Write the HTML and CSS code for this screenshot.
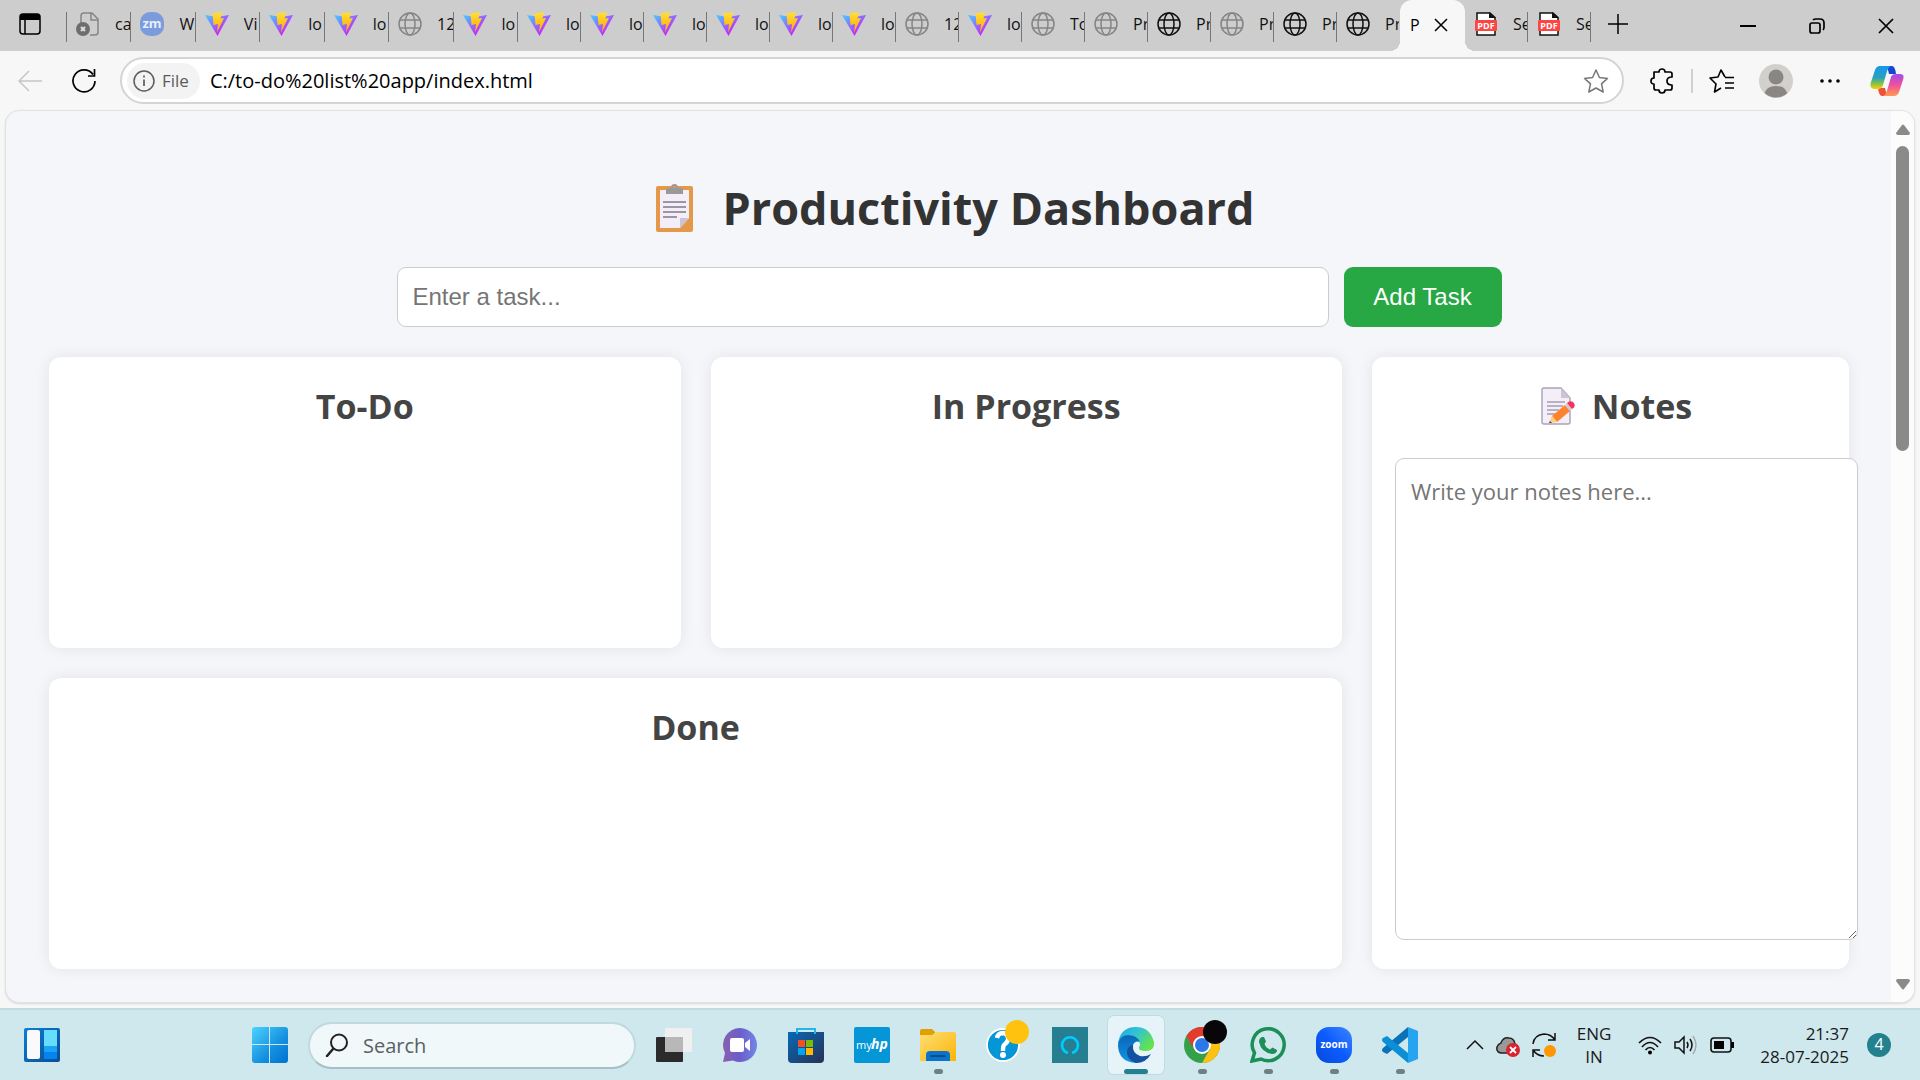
FILE: index.html
```html
<!DOCTYPE html>
<html lang="en">
<head>
<meta charset="utf-8">
<title>Productivity Dashboard</title>
<link rel="stylesheet" href="styles.css">
</head>
<body>
<svg class="defs" aria-hidden="true">
  <defs>
    <linearGradient id="viteTri" x1="0" y1="0" x2="1" y2="1"><stop offset="0" stop-color="#41d1ff"/><stop offset=".45" stop-color="#8f6bff"/><stop offset=".8" stop-color="#d01cff"/></linearGradient>
    <linearGradient id="viteBolt" x1="0" y1="0" x2="0" y2="1"><stop offset="0" stop-color="#ffe03a"/><stop offset="1" stop-color="#ffa800"/></linearGradient>
    <linearGradient id="winBlue" x1="0" y1="0" x2="1" y2="1"><stop offset="0" stop-color="#4cd3ff"/><stop offset=".6" stop-color="#1490df"/><stop offset="1" stop-color="#0070d0"/></linearGradient>
    <linearGradient id="widgetBlue" x1="0" y1="0" x2="1" y2="1"><stop offset="0" stop-color="#0a7fd8"/><stop offset="1" stop-color="#0c4c94"/></linearGradient>
    <linearGradient id="chatPurple" x1="0" y1="0" x2="1" y2="0"><stop offset="0" stop-color="#8a5fae"/><stop offset=".5" stop-color="#6a5fcb"/><stop offset="1" stop-color="#7286e6"/></linearGradient>
    <linearGradient id="storeBlue" x1="0" y1="0" x2="1" y2="1"><stop offset="0" stop-color="#0869b8"/><stop offset="1" stop-color="#263255"/></linearGradient>
    <linearGradient id="folderYellow" x1="0" y1="0" x2="1" y2="1"><stop offset="0" stop-color="#ffdf78"/><stop offset="1" stop-color="#fbb404"/></linearGradient>
    <linearGradient id="edgeTop" x1="0" y1="0" x2="1" y2=".6"><stop offset="0" stop-color="#1fa7e4"/><stop offset=".5" stop-color="#32c4d2"/><stop offset="1" stop-color="#66e34b"/></linearGradient>
    <linearGradient id="edgeLeft" x1="0" y1="0" x2="0" y2="1"><stop offset="0" stop-color="#0a66b6"/><stop offset="1" stop-color="#1295e8"/></linearGradient>
    <linearGradient id="zoomBlue" x1="0" y1="1" x2="1" y2="0"><stop offset="0" stop-color="#0848d8"/><stop offset=".5" stop-color="#0b5cff"/><stop offset="1" stop-color="#3f86ff"/></linearGradient>
    <linearGradient id="copA" x1="0" y1="0" x2="0" y2="1"><stop offset="0" stop-color="#1498f0"/><stop offset=".5" stop-color="#2aa0c0"/><stop offset=".75" stop-color="#7dc04a"/><stop offset="1" stop-color="#ffd000"/></linearGradient>
    <linearGradient id="copB" x1="0" y1="0" x2="0" y2="1"><stop offset="0" stop-color="#a04cf0"/><stop offset=".5" stop-color="#f0509a"/><stop offset="1" stop-color="#ff9a50"/></linearGradient>
    <symbol id="vite" viewBox="0 0 24 24"><path d="M0 3 12 5 24 3 12.500 24Z" fill="url(#viteTri)"/><path d="M7.500 1.500 17 0 15.500 6.500 19 6 12 20.500 13 12 8.500 13Z" fill="url(#viteBolt)"/></symbol>
    <symbol id="globe" viewBox="0 0 24 24"><g fill="none" stroke="currentColor" stroke-width="1.500"><circle cx="12" cy="12" r="11"/><ellipse cx="12" cy="12" rx="5" ry="11"/><path d="M2 8H22M2 16H22"/></g></symbol>
    <symbol id="pdf" viewBox="0 0 24 24"><path d="M3 1H16L21 5.500V23H3Z" fill="#fff" stroke="#111" stroke-width="1.500"/><path d="M15 0V6H22Z" fill="#111"/><rect x="1" y="8" width="22" height="11" rx="1" fill="#ff4444"/><text x="12" y="17" text-anchor="middle" class="pdf-text">PDF</text></symbol>
  </defs>
</svg>

<div class="screen">
  <header class="tabstrip">
    <button class="bare workspace" aria-label="Tab actions"><svg width="22" height="22" viewBox="0 0 22 22"><rect x="1" y="1" width="20" height="20" rx="3" fill="none" stroke="#000" stroke-width="1.500"/><path d="M1 7V4Q1 1 4 1H18Q21 1 21 4V7Z"/><path d="M6 7V21" stroke="#000" stroke-width="1.500"/></svg></button>
    <div class="tabs tabs-wide">
      <a class="tab" href="#"><svg class="fav gray"><path d="M5 13V4Q5 1 8 1H16L22 7V20Q22 23 19 23H14M15 1V8H22" fill="none" stroke="currentColor" stroke-width="1.500"/><circle cx="7" cy="17" r="7" fill="#6e6e6e"/><path d="M5 15 9 19M9 15 5 19" stroke="#ddd" stroke-width="2"/></svg><span>ca</span></a>
      <a class="tab" href="#"><svg class="fav"><rect width="24" height="24" rx="10" fill="#7b9bdd"/><text x="12" y="16" text-anchor="middle" class="zm-text">zm</text></svg><span>W</span></a>
      <a class="tab" href="#"><svg class="fav"><use href="#vite"/></svg><span>Vi</span></a>
      <a class="tab" href="#"><svg class="fav"><use href="#vite"/></svg><span>lo</span></a>
      <a class="tab" href="#"><svg class="fav"><use href="#vite"/></svg><span>lo</span></a>
      <a class="tab" href="#"><svg class="fav gray"><use href="#globe"/></svg><span>12</span></a>
      <a class="tab" href="#"><svg class="fav"><use href="#vite"/></svg><span>lo</span></a>
    </div>
    <div class="tabs">
      <a class="tab" href="#"><svg class="fav"><use href="#vite"/></svg><span>lo</span></a>
      <a class="tab" href="#"><svg class="fav"><use href="#vite"/></svg><span>lo</span></a>
      <a class="tab" href="#"><svg class="fav"><use href="#vite"/></svg><span>lo</span></a>
      <a class="tab" href="#"><svg class="fav"><use href="#vite"/></svg><span>lo</span></a>
      <a class="tab" href="#"><svg class="fav"><use href="#vite"/></svg><span>lo</span></a>
      <a class="tab" href="#"><svg class="fav"><use href="#vite"/></svg><span>lo</span></a>
      <a class="tab" href="#"><svg class="fav gray"><use href="#globe"/></svg><span>12</span></a>
      <a class="tab" href="#"><svg class="fav"><use href="#vite"/></svg><span>lo</span></a>
      <a class="tab" href="#"><svg class="fav gray"><use href="#globe"/></svg><span>To</span></a>
      <a class="tab" href="#"><svg class="fav gray"><use href="#globe"/></svg><span>Pr</span></a>
      <a class="tab" href="#"><svg class="fav"><use href="#globe"/></svg><span>Pr</span></a>
      <a class="tab" href="#"><svg class="fav gray"><use href="#globe"/></svg><span>Pr</span></a>
      <a class="tab" href="#"><svg class="fav"><use href="#globe"/></svg><span>Pr</span></a>
      <a class="tab last" href="#"><svg class="fav"><use href="#globe"/></svg><span>Pr</span></a>
      <div class="tab-active"><span>P</span><button class="bare" aria-label="Close tab"><svg width="14" height="14" viewBox="0 0 14 14"><path d="M1 1 13 13M13 1 1 13" stroke="#000" stroke-width="1.500"/></svg></button></div>
      <a class="tab" href="#"><svg class="fav"><use href="#pdf"/></svg><span>Se</span></a>
      <a class="tab" href="#"><svg class="fav"><use href="#pdf"/></svg><span>Se</span></a>
    </div>
    <button class="bare newtab" aria-label="New tab"><svg width="20" height="20" viewBox="0 0 20 20"><path d="M10 0V20M0 10H20" stroke="#000" stroke-width="1.500"/></svg></button>
    <div class="wincontrols">
      <button class="bare" aria-label="Minimize"><svg width="16" height="16" viewBox="0 0 16 16"><path d="M0 8H16" stroke="#000" stroke-width="2"/></svg></button>
      <button class="bare" aria-label="Restore"><svg width="16" height="16" viewBox="0 0 16 16"><g fill="none" stroke="#000" stroke-width="1.700"><rect x="1" y="5" width="10" height="10" rx="2"/><path d="M4 2Q5 1 7 1H11Q15 1 15 5V9Q15 11 14 12"/></g></svg></button>
      <button class="bare" aria-label="Close"><svg width="16" height="16" viewBox="0 0 16 16"><path d="M1 1 15 15M15 1 1 15" stroke="#000" stroke-width="1.700"/></svg></button>
    </div>
  </header>

  <nav class="toolbar">
    <button class="bare back" aria-label="Back"><svg width="24" height="22" viewBox="0 0 24 22"><path d="M24 11H1M11 1 1 11 11 21" fill="none" stroke="#c6c6c6" stroke-width="1.500"/></svg></button>
    <button class="bare reload" aria-label="Reload"><svg width="26" height="26" viewBox="0 0 26 26"><path d="M22 6.500A11 11 0 1 0 24 13M23.500 1V8H17" fill="none" stroke="#000" stroke-width="1.700"/></svg></button>
    <div class="address">
      <button class="file-chip"><svg width="22" height="22" viewBox="0 0 22 22"><circle cx="11" cy="11" r="10" fill="none" stroke="#5c5c5c" stroke-width="1.500"/><path d="M11 9.500V16M11 5.500V7.500" stroke="#5c5c5c" stroke-width="1.700"/></svg>File</button>
      <input class="url" type="text" aria-label="Address" value="C:/to-do%20list%20app/index.html">
      <button class="bare" aria-label="Favorite"><svg width="26" height="26" viewBox="0 0 26 26"><path d="M13 2 16.400 9.500 24.500 10.400 18.500 15.900 20.200 24 13 20 5.800 24 7.500 15.900 1.500 10.400 9.600 9.500Z" fill="none" stroke="#777" stroke-width="1.500" stroke-linejoin="round"/></svg></button>
    </div>
    <button class="bare tool" aria-label="Extensions"><svg width="24" height="26" viewBox="0 0 24 26"><path d="M4 4H9Q9 1 12 1 15 1 15 4H20Q22 4 22 6V9Q17 9 17 13 17 17 22 17V20Q22 22 20 22H15Q15 25 12 25 9 25 9 22H6Q4 22 4 20V16Q1 16 1 13 1 10 4 10Z" fill="none" stroke="#000" stroke-width="1.700" stroke-linejoin="round"/></svg></button>
    <span class="rule"></span>
    <button class="bare tool" aria-label="Favorites"><svg width="26" height="26" viewBox="0 0 26 26"><path d="M16 9 12 2 9 9 1 10 7 16 5.500 24 12 20M16 9.500H25M16 15H25M16 20H25" fill="none" stroke="#000" stroke-width="1.600" stroke-linejoin="round"/></svg></button>
    <button class="bare tool avatar" aria-label="Profile"><svg width="34" height="34" viewBox="0 0 34 34"><defs><clipPath id="avatarClip"><circle cx="17" cy="17" r="16.500"/></clipPath></defs><circle cx="17" cy="17" r="17" fill="#d2d0cc"/><g fill="#8a8684" clip-path="url(#avatarClip)"><circle cx="17" cy="13" r="7.500"/><path d="M5 34Q5 22 17 22T29 34Z"/></g></svg></button>
    <button class="bare tool dots" aria-label="Settings and more"><svg width="20" height="4" viewBox="0 0 20 4"><circle cx="2" cy="2" r="1.800"/><circle cx="10" cy="2" r="1.800"/><circle cx="18" cy="2" r="1.800"/></svg></button>
    <button class="bare tool copilot" aria-label="Copilot"><svg width="34" height="32" viewBox="0 0 34 32"><path d="M17 1H22Q25 1 26 9H19Z" fill="#1746d0"/><path d="M17 31H12Q9 31 8 23H15Z" fill="#f0503a"/><path d="M10 1H21Q18 2 16.500 8L13 20Q12 24 8 24H4Q-1 23 1 17L5 5Q6.500 1 10 1Z" fill="url(#copA)"/><path d="M24 31H13Q16 30 17.500 24L21 12Q22 9 26 9H30Q35 9 33 15L29 27Q27.500 31 24 31Z" fill="url(#copB)"/></svg></button>
  </nav>

  <div class="viewport">
    <main class="page">
      <h1><svg width="40" height="50" viewBox="0 0 40 50"><rect x="1" y="3" width="37" height="46" rx="2" fill="#e5984a"/><path d="M5 7H34V35L25 45H5Z" fill="#f3eef8"/><path d="M34 35H25V45Z" fill="#cbc3d6"/><path d="M11 11V7Q11 5 14 5H16Q16 1 19.500 1T23 5H25Q28 5 28 7V11Z" fill="#999"/><circle cx="19.500" cy="4" r="1.300" fill="#e5984a"/><path d="M8 19H31M8 24H31M8 29H31M8 34H22" stroke="#9b95a4" stroke-width="1.800"/></svg>Productivity Dashboard</h1>
      <form class="task-form">
        <input type="text" aria-label="Task" placeholder="Enter a task...">
        <button type="button">Add Task</button>
      </form>
      <div class="board">
        <section class="card"><h2>To-Do</h2></section>
        <section class="card"><h2>In Progress</h2></section>
        <section class="card done"><h2>Done</h2></section>
        <section class="card notes">
          <h2><svg width="36" height="38" viewBox="0 0 36 38"><path d="M3 1H20L29 11V35Q29 37 27 37H3Q1 37 1 35V3Q1 1 3 1Z" fill="#f3eef8" stroke="#aaa2b5" stroke-width="1.400"/><path d="M20 1V11H29Z" fill="#cbc3d6"/><path d="M6 15H24M6 19H22M6 23H18M6 27H15" stroke="#a49dae" stroke-width="1.300"/><path d="M24 18 29 24 16 35 11 29Z" fill="#ff822d"/><path d="M11 29 16 35 8 36Z" fill="#ffce7c"/><path d="M9 34 11 36 8 36Z" fill="#433b6b"/><path d="M24 18 26 16 31 22 29 24Z" fill="#d3c9dd"/><path d="M26 16Q29 13 32 15 36 19 31 22Z" fill="#f8315a"/></svg>Notes</h2>
          <textarea aria-label="Notes" placeholder="Write your notes here..."></textarea>
        </section>
      </div>
    </main>
    <div class="scrollbar">
      <svg width="14" height="11" viewBox="0 0 14 11"><path d="M6 1Q7 0 8 1L14 9Q14 11 12 11H2Q0 11 0 9Z" fill="#8a8a8a"/></svg>
      <div class="track"><div class="thumb"></div></div>
      <svg width="14" height="11" viewBox="0 0 14 11"><path d="M6 10Q7 11 8 10L14 2Q14 0 12 0H2Q0 0 0 2Z" fill="#8a8a8a"/></svg>
    </div>
  </div>

  <footer class="taskbar">
    <button class="bare widgets" aria-label="Widgets"><svg width="36" height="36" viewBox="0 0 36 36"><rect y="1" width="36" height="34" rx="2" fill="url(#widgetBlue)"/><rect x="3" y="3" width="13" height="29" rx="2" fill="#fafafa"/><path d="M20 3H33V19H20Z" fill="#66dcff"/><path d="M20 19H33V25H20Z" fill="#1ba4f5"/><path d="M20 25H33V32H20Z" fill="#0484ee"/></svg></button>
    <div class="launch">
      <button class="bare app" aria-label="Start"><svg width="36" height="36" viewBox="0 0 36 36"><path d="M3 0H17V17H0V3Q0 0 3 0ZM18 0H33Q36 0 36 3V17H18ZM0 18H17V36H3Q0 36 0 33ZM18 18H36V33Q36 36 33 36H18Z" fill="url(#winBlue)"/></svg></button>
      <label class="search"><svg width="24" height="24" viewBox="0 0 24 24"><circle cx="14" cy="9.500" r="8" fill="none" stroke="#222" stroke-width="2"/><path d="M8 16 2 23" stroke="#222" stroke-width="2.500" stroke-linecap="round"/></svg><input type="text" aria-label="Search" placeholder="Search"></label>
      <div class="apps">
        <button class="bare app" aria-label="Task view"><svg width="36" height="36" viewBox="0 0 36 36"><rect y="10" width="27" height="25" rx="1" fill="#2b2b2b"/><rect x="9" y="1" width="27" height="24" rx="1" fill="#f0f0f0"/><path d="M9 10H27V25H9Z" fill="#b8b8b8"/></svg></button>
        <button class="bare app" aria-label="Chat"><svg width="36" height="36" viewBox="0 0 36 36"><path d="M18 1A17 17 0 1 1 11 33.500L1 35 3 26A17 17 0 0 1 18 1Z" fill="url(#chatPurple)"/><rect x="8" y="11" width="14" height="14" rx="2" fill="#fff"/><path d="M23 16 28 12V24L23 20Z" fill="#fff"/></svg></button>
        <button class="bare app" aria-label="Store"><svg width="36" height="36" viewBox="0 0 36 36"><path d="M0 5H36V32Q36 36 32 36H4Q0 36 0 32Z" fill="url(#storeBlue)"/><path d="M10 13H17V20H10Z" fill="#f25022"/><path d="M18 13H25V20H18Z" fill="#7fba00"/><path d="M10 21H17V28H10Z" fill="#00a4ef"/><path d="M18 21H25V28H18Z" fill="#ffb900"/><path d="M9 7V2H27V7" fill="none" stroke="#22b6ee" stroke-width="2"/></svg></button>
        <button class="bare app" aria-label="myHP"><svg width="36" height="36" viewBox="0 0 36 36"><rect width="36" height="36" rx="2" fill="#0496d6"/><text x="2" y="22" class="my-text">my</text><text x="17" y="22" class="hp-text">hp</text></svg></button>
        <button class="bare app running" aria-label="File Explorer"><svg width="36" height="36" viewBox="0 0 36 36"><path d="M0 4Q0 2 2 2H12L15 5V12H0Z" fill="#e0a000"/><path d="M0 8H12L16 5H34Q36 5 36 7V34H0Z" fill="url(#folderYellow)"/><path d="M6 34V28Q6 24 10 24H26Q30 24 30 28V34Z" fill="#0a74cc"/><path d="M11 29H25" stroke="#084a8c" stroke-width="2" stroke-linecap="round"/></svg></button>
        <button class="bare app" aria-label="Help"><svg width="36" height="36" viewBox="0 0 36 36"><circle cx="17" cy="18" r="16" fill="#0496d6" stroke="#fff" stroke-width="1.800"/><path d="M11 11Q12 6 17 6 23 7 22 13 21 16 18 18 17 19 17 24" fill="none" stroke="#fff" stroke-width="4.500"/><circle cx="17" cy="28" r="3" fill="#fff"/></svg><span class="dot-badge amber"></span></button>
        <button class="bare app" aria-label="Alexa"><svg width="36" height="36" viewBox="0 0 36 36"><path d="M0 0H36V36H0Z" fill="#267f91"/><path d="M16 26A8 8 0 1 1 20 26" fill="none" stroke="#00caff" stroke-width="2.500"/></svg></button>
        <button class="bare app running current" aria-label="Edge"><svg width="36" height="36" viewBox="0 0 36 36"><path d="M0 17Q2 0 18 0 32 0 36 15 37 24 27 24 20 24 21 20 23 18 21 14 16 7 8 9 2 11 0 17Z" fill="url(#edgeTop)"/><path d="M0 19Q0 9 10 8 19 8 22 15 17 13 15 18 13 27 22 34 20 36 18 36 1 35 0 19Z" fill="url(#edgeLeft)"/><path d="M15 18Q14 26 22 29 28 30 33 27 28 36 18 36 9 33 9 25 9 19 15 18Z" fill="#1452a0"/></svg></button>
        <button class="bare app running" aria-label="Chrome"><svg width="36" height="36" viewBox="0 0 36 36"><circle cx="18" cy="18" r="18" fill="#34a048"/><path d="M2.400 9A18 18 0 0 1 33.600 9L34 10H18L10 22Z" fill="#e33b2e"/><path d="M33.600 9A18 18 0 0 1 18 36L26 22 18 10Z" fill="#fdc113"/><circle cx="18" cy="18" r="9" fill="#fff"/><circle cx="18" cy="18" r="7" fill="#2b78e8"/></svg><span class="dot-badge black"></span></button>
        <button class="bare app running" aria-label="WhatsApp"><svg width="36" height="36" viewBox="0 0 36 36"><path d="M2 34 4.500 26A16 16 0 1 1 11 32Z" fill="none" stroke="#1c8e58" stroke-width="3.500"/><path d="M12 10 14 10 16 14.500 14.500 17Q16 21 20 22.500L22.500 20.500 27 23Q27 27 22 27 11 25 9 15 9 11 12 10Z" fill="#1c8e58"/></svg></button>
        <button class="bare app running" aria-label="Zoom"><svg width="36" height="36" viewBox="0 0 36 36"><rect width="36" height="36" rx="13" fill="url(#zoomBlue)"/><text x="18" y="21" text-anchor="middle" class="zoom-text">zoom</text></svg></button>
        <button class="bare app running" aria-label="Visual Studio Code"><svg width="36" height="36" viewBox="0 0 36 36"><path d="M26 0V10L5 27 1 25Q-1 23 1 21Z" fill="#0a72b8"/><path d="M26 36V26L5 9 1 11Q-1 13 1 15Z" fill="#0b8fd6"/><path d="M26 0 36 4V32L26 36Z" fill="#27a4f0"/></svg></button>
      </div>
    </div>
    <div class="tray">
      <button class="bare" aria-label="Hidden icons"><svg width="18" height="24" viewBox="0 0 18 24"><path d="M1 16 9 8 17 16" fill="none" stroke="#111" stroke-width="1.500"/></svg></button>
      <svg width="24" height="24" viewBox="0 0 24 24"><path d="M5 20Q0 19 1 14 2 11 5 10 7 4 13 5 18 5 19 11 23 13 22 17 21 20 18 20Z" fill="#999" stroke="#222" stroke-width="1.500"/><circle cx="17" cy="17" r="7" fill="#d9232e"/><path d="M14 14 20 20M20 14 14 20" stroke="#fff" stroke-width="1.800"/></svg>
      <svg width="24" height="24" viewBox="0 0 24 24"><path d="M1 11Q2 2 12 1 19 1 23 7M23 0V7H16M1 24V17H8M1 17Q5 23 12 23" fill="none" stroke="#111" stroke-width="1.500"/><circle cx="18" cy="18" r="6" fill="#ff9800"/></svg>
      <div class="lang">ENG<br>IN</div>
      <div class="status">
        <svg width="24" height="24" viewBox="0 0 24 24"><g fill="none" stroke="#111" stroke-width="1.700"><path d="M1 10Q12-1 23 10M4 14Q12 5 20 14M7.500 17Q12 12 16.500 17"/></g><circle cx="12" cy="19.500" r="2"/></svg>
        <svg width="24" height="24" viewBox="0 0 24 24"><g fill="none" stroke="#111" stroke-width="1.500"><path d="M1 9H5L10 4V20L5 15H1ZM13 9Q15 12 13 15M16 6Q20 12 16 18"/><path d="M19 3Q25 12 19 21" stroke="#9fb0b4"/></g></svg>
        <svg width="24" height="24" viewBox="0 0 24 24"><rect x="1" y="5" width="20" height="14" rx="3" fill="none" stroke="#111" stroke-width="1.600"/><path d="M4 8H14V16H4Z"/><path d="M21 9H24V15H21Z"/></svg>
      </div>
      <div class="clock">21:37<br>28-07-2025</div>
      <span class="count">4</span>
    </div>
  </footer>
</div>
</body>
</html>
```
FILE: styles.css
```css
* { box-sizing: border-box; }
body { margin: 0; background: #f7f7f7; font-family: "Open Sans", "Noto Sans", sans-serif; color: #000; }
.defs { position: absolute; width: 0; height: 0; }
svg { display: block; flex: none; }
.bare { display: flex; align-items: center; justify-content: center; padding: 0; border: 0; background: none; }
.screen { display: flex; flex-direction: column; height: 100vh; overflow: hidden; }

.tabstrip { display: flex; align-items: stretch; flex: none; height: 51px; background: #cdcdcd; }
.workspace { width: 60px; margin-right: 7px; padding-bottom: 3px; }
.tabs { display: flex; }
.tabs-wide { width: 451px; }
.tabs-wide .tab { flex: 1 1 0; }
.tab { position: relative; display: flex; align-items: center; width: 63px; padding: 0 1px 4px 9px; color: #111; font-size: 16px; text-decoration: none; }
.tab::after { content: ""; position: absolute; right: 0; top: 12px; width: 1px; height: 30px; background: #777; }
.tab.last::after { display: none; }
.tab span { flex: 1; margin-left: 15px; overflow: hidden; white-space: nowrap; min-width: 0; }
.tabs-wide .tab:first-child::before { content: ""; position: absolute; left: -1px; top: 12px; width: 1px; height: 30px; background: #777; }
.fav { width: 24px; height: 24px; color: #111; }
.fav.gray { color: #858585; }
.zm-text { font: bold 13px "Open Sans", sans-serif; fill: #e8eefc; }
.pdf-text { font: bold 9px "Open Sans", sans-serif; fill: #fff; }
.tab-active { position: relative; display: flex; align-items: center; width: 65px; padding: 0 17px 2px 10px; background: #f7f7f7; border-radius: 12px 12px 0 0; font-size: 16px; }
.tab-active::before, .tab-active::after { content: ""; position: absolute; bottom: 0; width: 10px; height: 10px; }
.tab-active::before { left: -10px; background: radial-gradient(circle at 0 0, #cdcdcd 10px, #f7f7f7 10px); }
.tab-active::after { right: -10px; background: radial-gradient(circle at 100% 0, #cdcdcd 10px, #f7f7f7 10px); }
.tab-active span { margin-right: auto; }
.newtab { width: 54px; padding-bottom: 4px; }
.wincontrols { display: flex; margin-left: auto; }
.wincontrols button { width: 69px; }

.toolbar { display: flex; align-items: center; flex: none; height: 59px; padding: 0 15px 0 18px; }
.reload { margin: 0 23px 0 29px; }
.address { display: flex; align-items: center; flex: 1; height: 47px; margin-right: 20px; padding: 0 13px 0 5px; border: 2px solid #d4d4d4; border-radius: 24px; background: #fff; }
.file-chip { display: flex; align-items: center; gap: 7px; height: 36px; padding: 0 11px 0 6px; border: 0; border-radius: 18px; background: #f3f3f3; color: #5c5c5c; font: 500 17px "Open Sans", sans-serif; }
.url { flex: 1; min-width: 0; margin-left: 10px; padding: 0; border: 0; outline: 0; background: none; font: 20px "Open Sans", sans-serif; color: #000; }
.tool { width: 36px; height: 36px; }
.rule { width: 2px; height: 24px; margin: 0 11px; background: #cfcfcf; }
.avatar { margin: 0 18px; }
.copilot { margin-left: 21px; }

.viewport { display: flex; flex: 1; min-height: 0; margin: 0 5px 5px; border: 1px solid #e2e2e4; border-radius: 14px; overflow: hidden; background: #f4f6fa; box-shadow: 0 1px 2px #d8d8d8; }
.page { flex: 1; min-width: 0; padding: 60px 42px 0 43px; overflow: hidden; }
.page h1 { display: flex; align-items: center; justify-content: center; gap: 27px; height: 74px; margin: 0 0 22px; padding-left: 12px; color: #333; font-size: 45px; line-height: 72px; font-weight: 700; }
.task-form { display: flex; justify-content: center; gap: 15px; margin: 0 0 30px; }
.task-form input { width: 932px; height: 60px; padding: 0 15px; border: 1px solid #ccc; border-radius: 9px; background: #fff; font: 24px "Liberation Sans", Arial, sans-serif; }
.task-form input::placeholder, textarea::placeholder { color: #757575; }
.task-form button { width: 158px; height: 60px; border: 0; border-radius: 9px; background: #28a745; color: #fff; font: 24px "Liberation Sans", Arial, sans-serif; }
.board { display: grid; grid-template-columns: 1fr 1fr 477px; grid-auto-rows: 291px; gap: 30px; max-width: 1800px; margin: 0 auto; }
.card { padding: 22px; border-radius: 12px; background: #fff; box-shadow: 0 0 15px rgba(0, 0, 0, .08); }
.card h2 { display: flex; align-items: center; justify-content: center; gap: 15px; margin: 0 0 25px; color: #444; font-size: 34px; line-height: 54px; font-weight: 700; }
.done { grid-column: 1 / 3; }
.notes { grid-column: 3; grid-row: 1 / 3; display: flex; flex-direction: column; padding: 22px 23px 29px; }
.notes h2 { padding-left: 12px; }
.notes textarea { box-sizing: content-box; display: block; flex: 1; width: 100%; padding: 15px; border: 1px solid #ccc; border-radius: 9px; background: #fff; font: 22px/34px "Open Sans", sans-serif; resize: vertical; }
.scrollbar { display: flex; flex-direction: column; align-items: center; width: 23px; padding: 13px 0 12px; background: #fcfcfc; }
.track { flex: 1; padding: 11px 0; }
.thumb { width: 13px; height: 305px; border-radius: 7px; background: #8a8a8a; }

.taskbar { display: flex; align-items: center; flex: none; height: 72px; padding: 0 29px 0 24px; border-top: 2px solid #c0dbe1; background: #cfe8ed; }
.launch { display: flex; align-items: center; flex: 1; margin-left: 178px; }
.app { position: relative; width: 66px; height: 58px; }
.launch > .app { margin: 0 -1px; }
.search { display: flex; align-items: center; width: 328px; height: 47px; margin-left: 6px; padding: 0 15px; border: 2px solid #bfd9e0; border-bottom-color: #a5bfc6; border-radius: 24px; background: #f0f8fa; }
.search input { flex: 1; min-width: 0; margin-left: 14px; padding: 0; border: 0; outline: 0; background: none; font: 20px "Open Sans", sans-serif; }
.search input::placeholder { color: #5a6163; }
.apps { display: flex; margin-left: 5px; }
.my-text { font: 11px "Open Sans", sans-serif; fill: #fff; }
.hp-text { font: italic bold 14px "Open Sans", sans-serif; fill: #fff; }
.zoom-text { font: bold 10px "Open Sans", sans-serif; fill: #fff; }
.running::after { content: ""; position: absolute; left: 50%; bottom: 0; width: 9px; height: 5px; margin-left: -4px; border-radius: 3px; background: #6f7f83; }
.current { width: 56px; margin: 0 5px; border-radius: 6px; background: #e6f3f8; box-shadow: 0 0 0 1px #c2dbe2; }
.current::after { width: 24px; margin-left: -12px; background: #23808f; }
.dot-badge { position: absolute; left: 34px; top: 4px; width: 24px; height: 24px; border-radius: 50%; }
.amber { background: #ffc20e; }
.black { background: #080608; }
.tray { display: flex; align-items: center; gap: 12px; font-size: 17px; line-height: 23px; color: #1a1a1a; }
.lang { width: 40px; margin-left: 6px; text-align: center; }
.status { display: flex; gap: 12px; margin-left: 12px; }
.clock { width: 103px; text-align: right; }
.count { width: 24px; height: 24px; margin-left: 6px; border-radius: 50%; background: #23808f; color: #fff; font-size: 16px; text-align: center; }
```
